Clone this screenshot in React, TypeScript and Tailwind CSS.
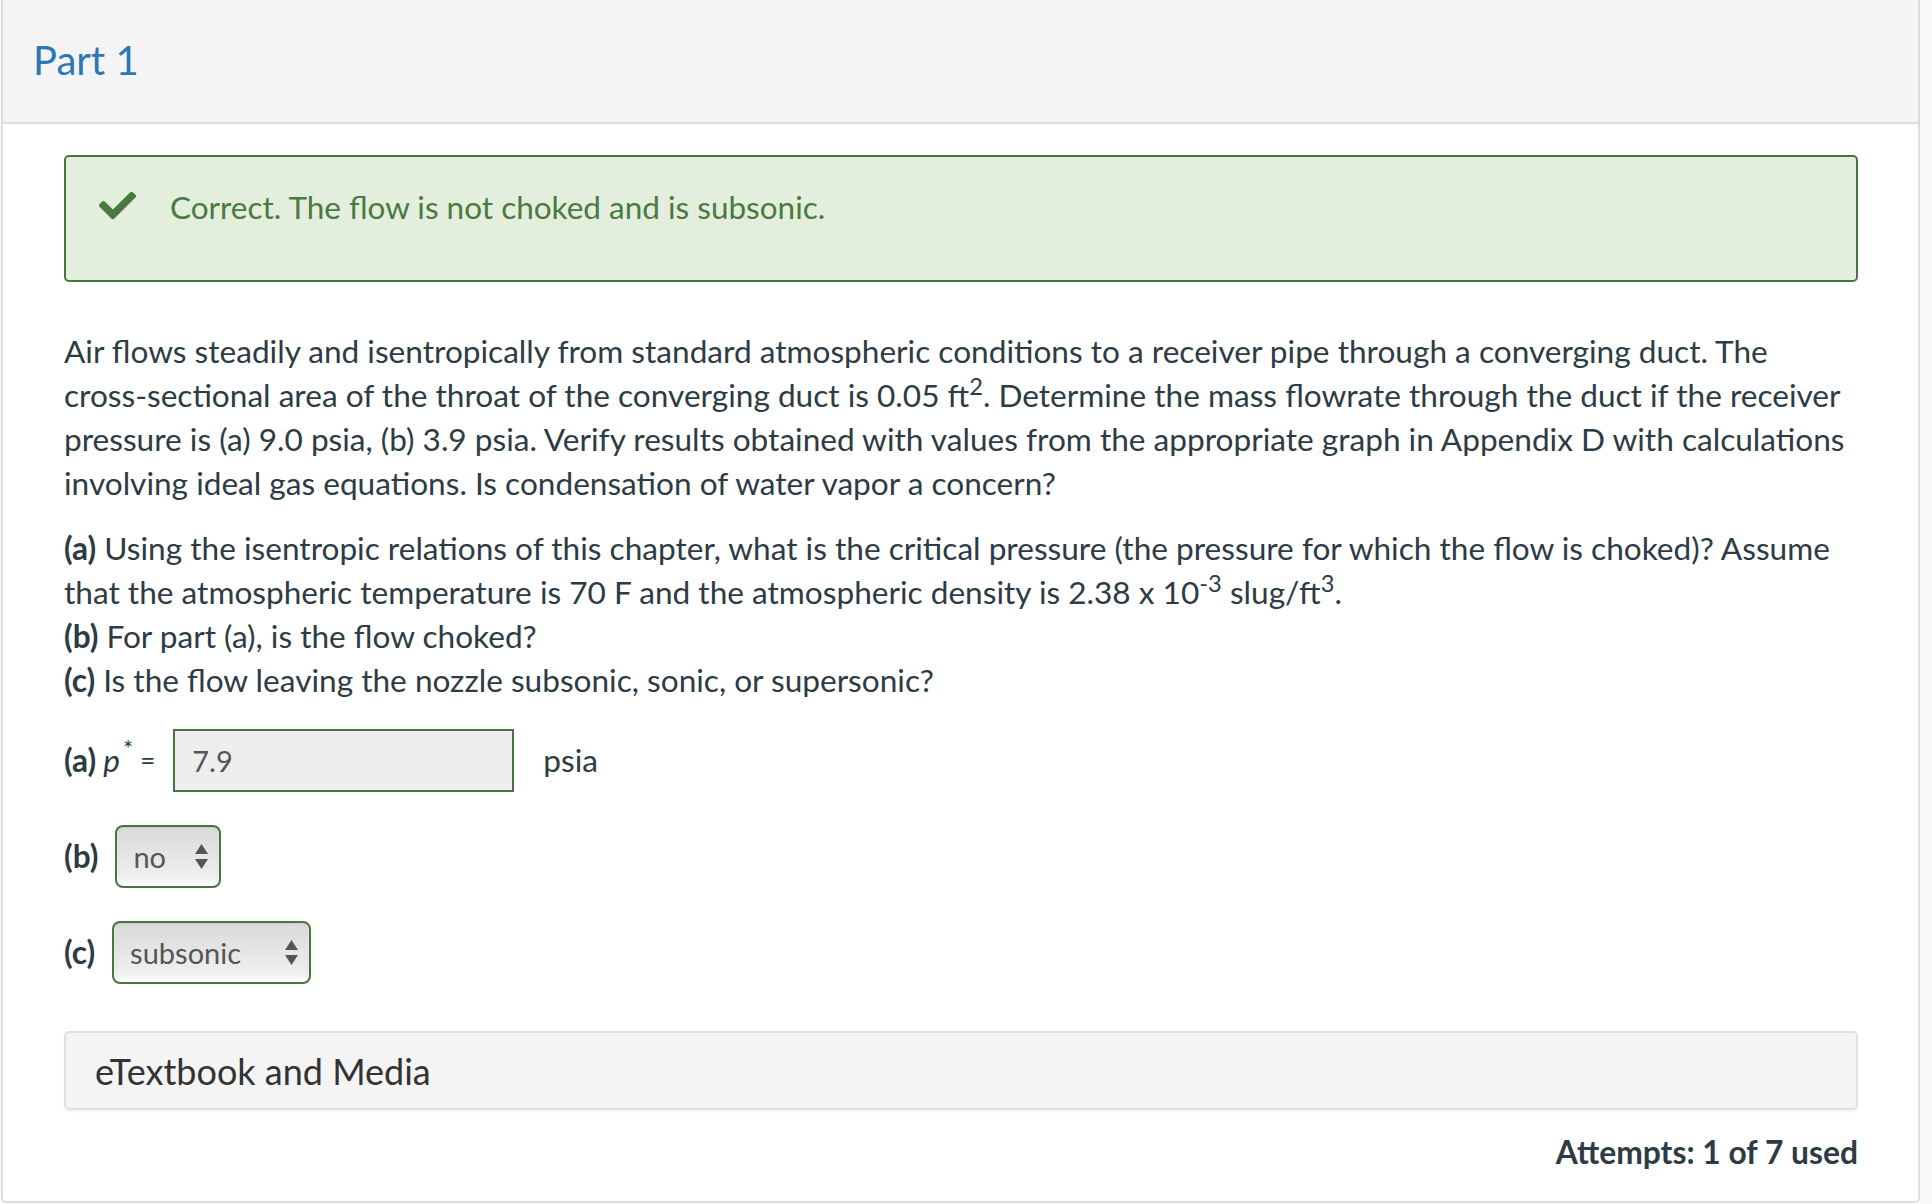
import React from 'react';
import { FaCheck } from 'react-icons/fa';

const SelectArrows: React.FC = () => (
  <svg width="13" height="25" viewBox="0 0 13 25" className="shrink-0">
    <polygon points="0,10 6.5,0 13,10" fill="#555" />
    <polygon points="0,15 13,15 6.5,25" fill="#555" />
  </svg>
);

interface FakeSelectProps {
  value: string;
  width: string;
}

const FakeSelect: React.FC<FakeSelectProps> = ({ value, width }) => (
  <div
    className={`${width} h-[63px] flex items-center justify-between pl-[16px] pr-[11px] rounded-[8px] border-2 border-[#4a7540] bg-linear-to-b from-[#d9d9d9] via-[#e6e6e6] to-[#f3f3f3] shadow-[inset_0_-4px_4px_rgba(255,255,255,0.85),inset_2px_0_3px_rgba(0,0,0,0.06),inset_-2px_0_3px_rgba(0,0,0,0.06)] text-[29px] text-[#555]`}
  >
    <span>{value}</span>
    <SelectArrows />
  </div>
);

const App: React.FC = () => {
  return (
    <div className="w-[1932px] h-[1204px] overflow-hidden bg-[#fafafa] font-[Lato,sans-serif] text-[#2d3b45]">
      <div className="ml-px w-[1919px] h-[1203px] bg-white border-x-2 border-b-2 border-[#dddddd] rounded-b-[5px]">
        {/* part header */}
        <div className="h-[124px] bg-[#f4f4f4] border-b-2 border-[#dddddd] flex items-center pl-[30px] pb-[3px]">
          <h2 className="text-[40px] leading-none text-[#2b78b5]">Part 1</h2>
        </div>

        <div className="pl-[61px] pr-[60px] pt-[31px]">
          {/* feedback */}
          <div className="relative h-[127px] rounded-[5px] border-2 border-[#4a7540] bg-[#e3efdc] pl-[104px] pt-[28px]">
            <FaCheck className="absolute left-[33px] top-[30px] text-[#4a7a40]" size={37} />
            <p className="text-[31.5px] leading-[45px] text-[#4a7a3f]">Correct. The flow is not choked and is subsonic.</p>
          </div>

          {/* question */}
          <p className="mt-[47px] text-[31.6px] leading-[44px] whitespace-nowrap">
            Air flows steadily and isentropically from standard atmospheric conditions to a receiver pipe through a converging duct. The
            <br />
            cross-sectional area of the throat of the converging duct is 0.05 ft<sup>2</sup>. Determine the mass flowrate through the duct if the receiver
            <br />
            pressure is (a) 9.0 psia, (b) 3.9 psia. Verify results obtained with values from the appropriate graph in Appendix D with calculations
            <br />
            involving ideal gas equations. Is condensation of water vapor a concern?
          </p>

          <p className="mt-[21px] text-[31.6px] leading-[44px] whitespace-nowrap">
            <strong className="font-bold">(a)</strong> Using the isentropic relations of this chapter, what is the critical pressure (the pressure for which the flow is choked)? Assume
            <br />
            that the atmospheric temperature is 70 F and the atmospheric density is 2.38 x 10<sup>-3</sup> slug/ft<sup>3</sup>.
            <br />
            <strong className="font-bold">(b)</strong> For part (a), is the flow choked?
            <br />
            <strong className="font-bold">(c)</strong> Is the flow leaving the nozzle subsonic, sonic, or supersonic?
          </p>

          {/* answers */}
          <div className="mt-[27px] flex items-center text-[31.6px]">
            <span className="font-bold">(a)</span>
            <span className="ml-[7px] italic">p</span>
            <span className="ml-[3px] -mt-[26px] text-[24px] leading-none">*</span>
            <span className="ml-[7px] text-[26px]">=</span>
            <div className="ml-[18px] w-[341px] h-[63px] border-2 border-[#4a7540] bg-[#eeeeee] flex items-center pl-[17px] text-[29px] text-[#555]">
              7.9
            </div>
            <span className="ml-[29px]">psia</span>
          </div>

          <div className="mt-[33px] flex items-center text-[31.6px]">
            <span className="font-bold">(b)</span>
            <div className="ml-[17px]">
              <FakeSelect value="no" width="w-[106px]" />
            </div>
          </div>

          <div className="mt-[33px] flex items-center text-[31.6px]">
            <span className="font-bold">(c)</span>
            <div className="ml-[17px]">
              <FakeSelect value="subsonic" width="w-[199px]" />
            </div>
          </div>

          {/* media */}
          <div className="mt-[47px] h-[79px] rounded-[5px] border-2 border-[#e0e0e0] bg-[#f4f4f4] shadow-[0_2px_2px_rgba(0,0,0,0.05)] flex items-center pl-[29px]">
            <span className="text-[36px] text-[#333]">eTextbook and Media</span>
          </div>

          <div className="mt-[20px] flex justify-end">
            <span className="text-[31.8px] leading-[45px] font-bold">Attempts: 1 of 7 used</span>
          </div>
        </div>
      </div>
    </div>
  );
};

export default App;
